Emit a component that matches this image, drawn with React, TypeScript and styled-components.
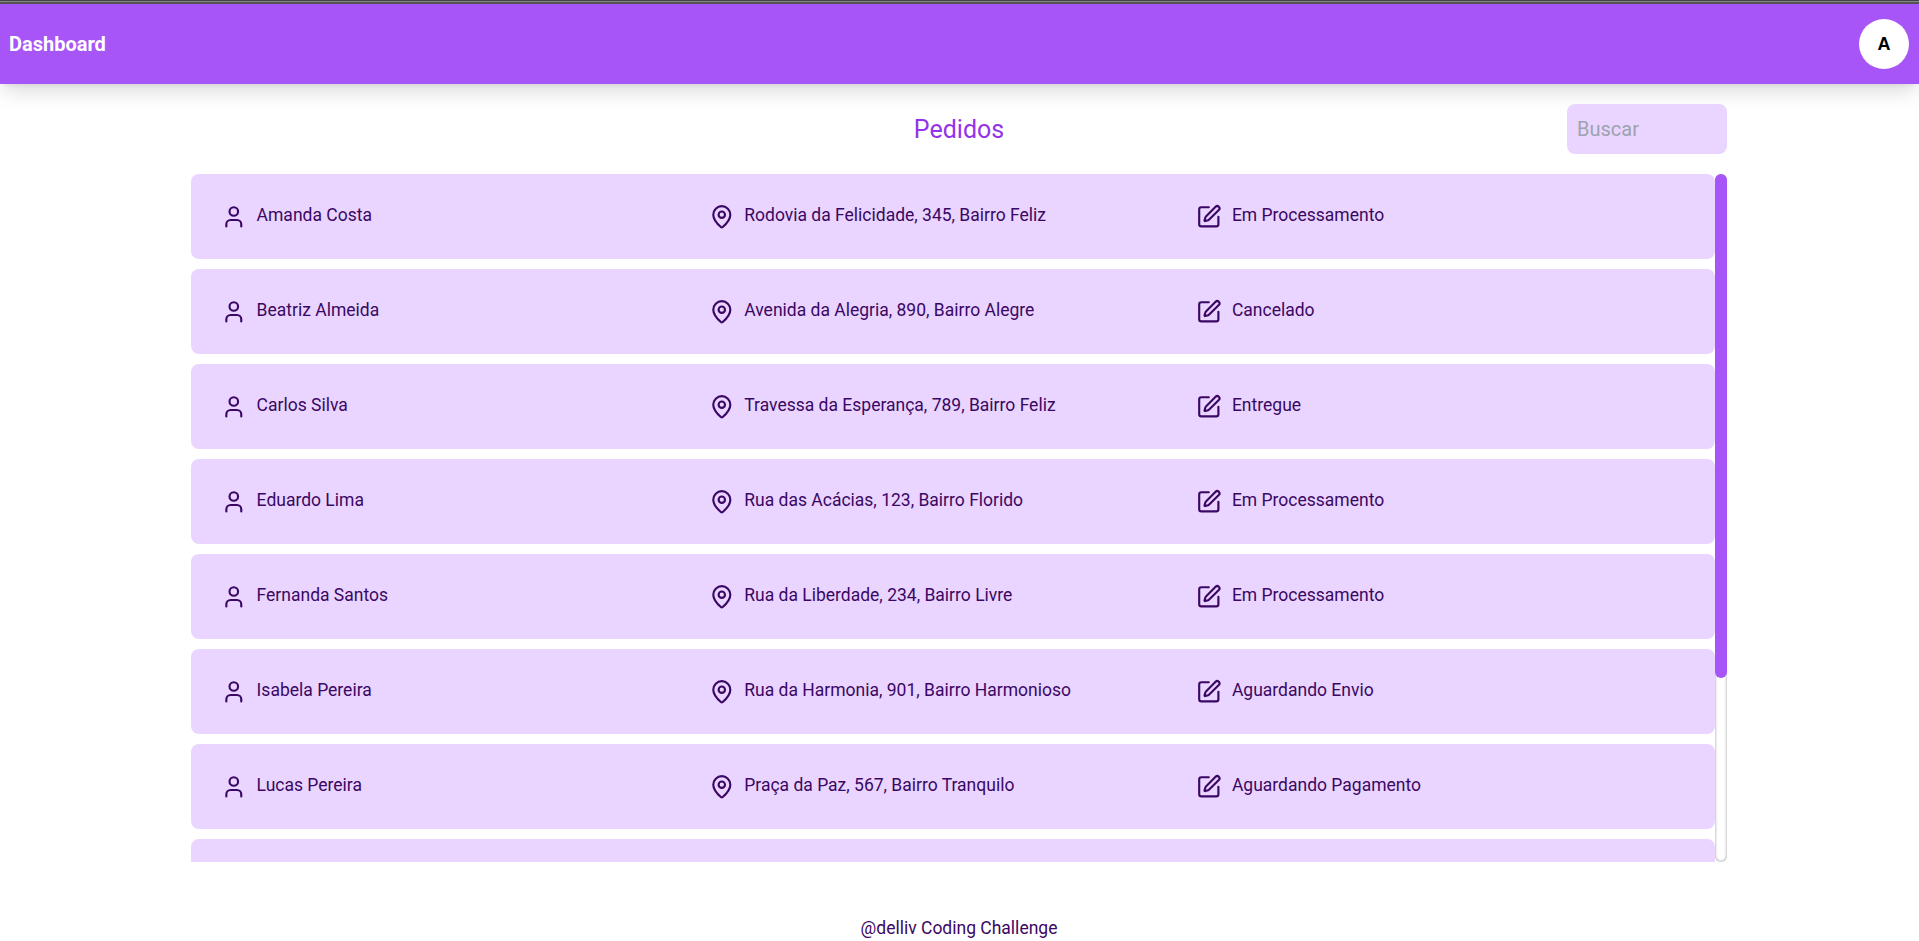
import React from "react";
import styled, { createGlobalStyle } from "styled-components";
import { User, MapPin, SquarePen } from "lucide-react";

const Global = createGlobalStyle`
  html, body { margin: 0; padding: 0; height: 100%; background: #fff; }
  body { font-family: Roboto, "Liberation Sans", sans-serif; overflow: hidden; }
  * { box-sizing: border-box; }
`;

const Page = styled.div`
  height: 941px;
  display: flex;
  flex-direction: column;
  background: #fff;
`;

const TopStrip = styled.div`
  height: 4px;
  background: linear-gradient(#444 0 1px, #888 1px 2px, #555 2px 4px);
`;

const Header = styled.header`
  height: 80px;
  display: flex;
  align-items: center;
  justify-content: space-between;
  padding: 0 10px 0 9px;
  background: #a855f7;
  box-shadow: 0 10px 20px -3px rgba(0, 0, 0, 0.14), 0 4px 6px -4px rgba(0, 0, 0, 0.1);
`;

const Brand = styled.div`
  color: #fff;
  font-size: 20px;
  font-weight: 700;
`;

const Avatar = styled.div`
  width: 50px;
  height: 50px;
  border-radius: 50%;
  background: #fff;
  color: #000;
  display: flex;
  align-items: center;
  justify-content: center;
  font-family: "Liberation Sans", sans-serif;
  font-size: 18px;
  font-weight: 700;
`;

const Main = styled.main`
  width: 1536px;
  margin: 0 192px 0 191px;
  padding-top: 20px;
  display: flex;
  flex-direction: column;
`;

const TitleBar = styled.div`
  position: relative;
  height: 50px;
  display: flex;
  align-items: center;
  justify-content: center;
  margin-bottom: 20px;
`;

const Title = styled.h1`
  margin: 0;
  color: #9333ea;
  font-size: 25px;
  font-weight: 400;
`;

const Search = styled.input`
  position: absolute;
  right: 0;
  top: 0;
  width: 160px;
  height: 50px;
  border: 0;
  outline: 0;
  border-radius: 8px;
  padding: 0 10px;
  background: #e9d5ff;
  font-family: inherit;
  font-size: 20px;
  color: #3b0764;
  &::placeholder { color: #9ca3af; opacity: 1; }
`;

const ListArea = styled.div`
  height: 688px;
  display: flex;
`;

const List = styled.div`
  flex: 1;
  overflow: hidden;
  display: flex;
  flex-direction: column;
  gap: 10px;
`;

const Rail = styled.div`
  flex: 0 0 12px;
  border-radius: 6px;
  box-shadow: inset 0 0 3px rgba(0, 0, 0, 0.45);
`;

const Thumb = styled.div`
  height: 504px;
  border-radius: 6px;
  background: #a855f7;
`;

const Row = styled.div`
  flex: 0 0 85px;
  display: grid;
  grid-template-columns: repeat(3, 1fr);
  align-items: center;
  padding: 0 31px 0 30px;
  border-radius: 8px;
  background: #e9d5ff;
  color: #3b0764;
  font-size: 17.5px;
`;

const Cell = styled.div`
  display: flex;
  align-items: center;
  gap: 10px;
  svg { flex: none; }
`;

const Label = styled.span`
  padding-bottom: 4px;
`;

const Footer = styled.footer`
  margin-top: 56px;
  text-align: center;
  color: #3b0764;
  font-size: 17.5px;
`;

const orders = [
  ["Amanda Costa", "Rodovia da Felicidade, 345, Bairro Feliz", "Em Processamento"],
  ["Beatriz Almeida", "Avenida da Alegria, 890, Bairro Alegre", "Cancelado"],
  ["Carlos Silva", "Travessa da Esperança, 789, Bairro Feliz", "Entregue"],
  ["Eduardo Lima", "Rua das Acácias, 123, Bairro Florido", "Em Processamento"],
  ["Fernanda Santos", "Rua da Liberdade, 234, Bairro Livre", "Em Processamento"],
  ["Isabela Pereira", "Rua da Harmonia, 901, Bairro Harmonioso", "Aguardando Envio"],
  ["Lucas Pereira", "Praça da Paz, 567, Bairro Tranquilo", "Aguardando Pagamento"],
];

export default function App() {
  return (
    <Page>
      <Global />
      <TopStrip />
      <Header>
        <Brand>Dashboard</Brand>
        <Avatar>A</Avatar>
      </Header>
      <Main>
        <TitleBar>
          <Title>Pedidos</Title>
          <Search placeholder="Buscar" />
        </TitleBar>
        <ListArea>
          <List>
            {orders.map(([name, address, status]) => (
              <Row key={name}>
                <Cell><User size={25.6} /><Label>{name}</Label></Cell>
                <Cell><MapPin size={25.6} /><Label>{address}</Label></Cell>
                <Cell><SquarePen size={25.6} /><Label>{status}</Label></Cell>
              </Row>
            ))}
            <Row />
          </List>
          <Rail><Thumb /></Rail>
        </ListArea>
        <Footer>@delliv Coding Challenge</Footer>
      </Main>
    </Page>
  );
}
